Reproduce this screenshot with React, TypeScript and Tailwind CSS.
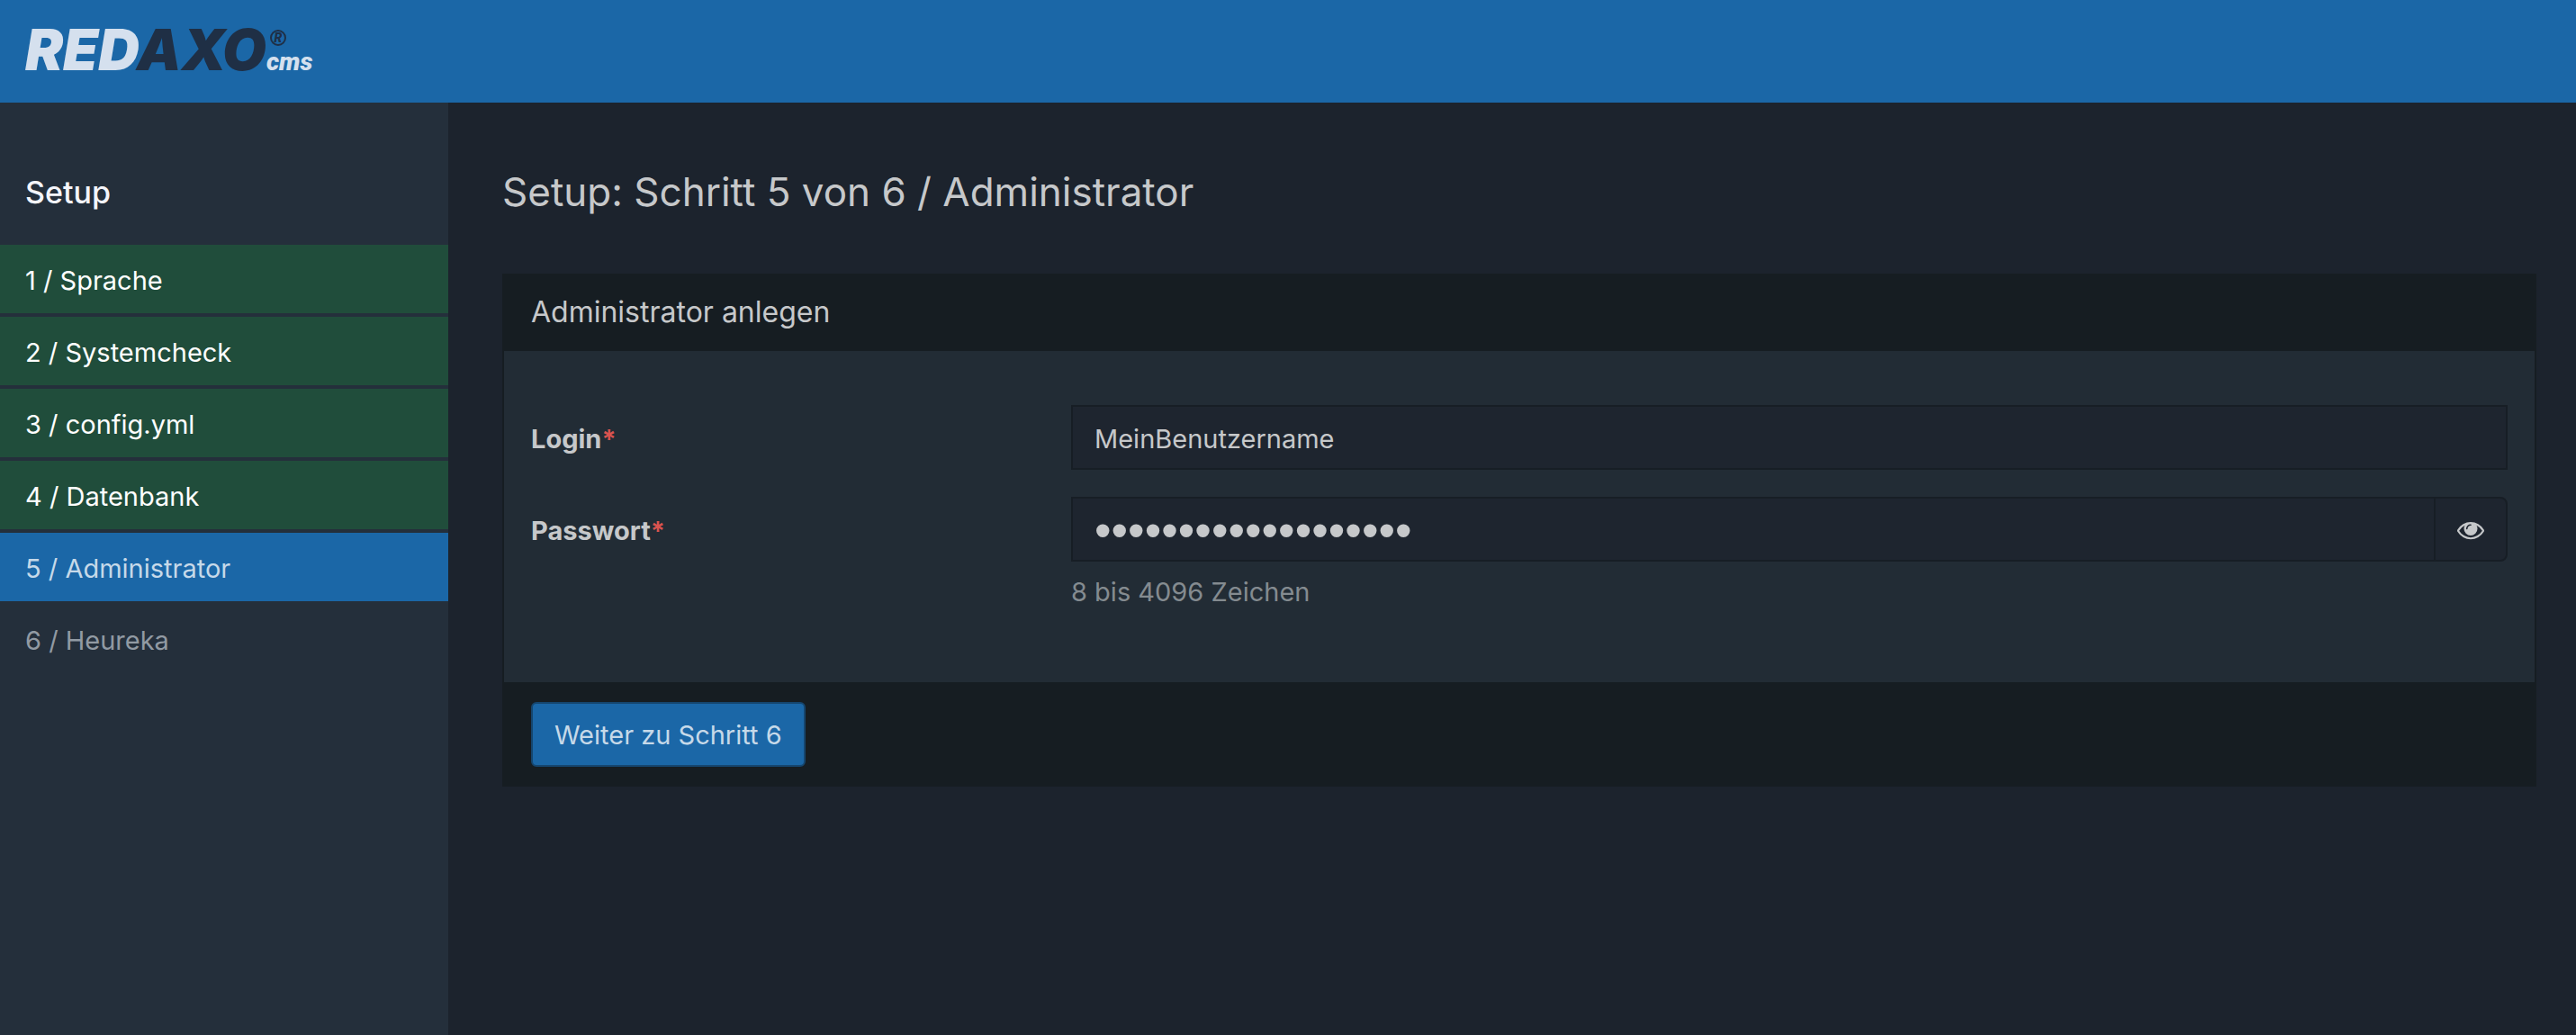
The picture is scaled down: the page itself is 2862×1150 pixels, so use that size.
import { useState } from "react";

const steps = [
  { label: "1 / Sprache", state: "done" },
  { label: "2 / Systemcheck", state: "done" },
  { label: "3 / config.yml", state: "done" },
  { label: "4 / Datenbank", state: "done" },
  { label: "5 / Administrator", state: "active" },
  { label: "6 / Heureka", state: "open" },
];

const stepStyles: Record<string, string> = {
  done: "bg-[#204d3b] text-white",
  active: "bg-[#1b67a7] text-[#c6d9e9]",
  open: "text-[#919aa3]",
};

function Logo() {
  return (
    <a href="#" aria-label="REDAXO cms" className="flex items-baseline font-black italic leading-none">
      <span className="text-[63px] leading-none text-[#d5e0ee]">
        RED<span className="text-[#1f2f45]">AXO</span>
      </span>
      <span className="relative font-[Roboto,sans-serif] text-[28px] leading-none text-[#d5e0ee]">
        cms
        <span className="absolute bottom-8 left-1 flex size-[18px] items-center justify-center rounded-full border-2 border-[#1f2f45] text-[14px] leading-none text-[#1f2f45]">
          R
        </span>
      </span>
    </a>
  );
}

function EyeIcon() {
  return (
    <svg viewBox="0 384 1792 1152" className="w-[30px]" fill="currentColor" aria-hidden="true">
      <path d="M1664 960q-152-236-381-353 61 104 61 225 0 185-131.500 316.500t-316.500 131.500-316.500-131.500-131.500-316.500q0-121 61-225-229 117-381 353 133 205 333.500 326.500t434.500 121.500 434.500-121.500 333.500-326.500zM944 576q0-20-14-34t-34-14q-125 0-214.500 89.500t-89.500 214.500q0 20 14 34t34 14 34-14 14-34q0-86 61-147t147-61q20 0 34-14t14-34zM1792 960q0 34-20 69-140 230-376.500 368.500t-499.500 138.500-499.500-139-376.500-368q-20-35-20-69t20-69q140-229 376.500-368t499.500-139 499.500 139 376.500 368q20 35 20 69z" />
    </svg>
  );
}

function Label({ id, children }: { id: string; children: string }) {
  return (
    <label htmlFor={id} className="flex h-[72px] w-[600px] shrink-0 items-center pt-1 font-bold">
      {children}
      <span className="text-[#d9534f]">*</span>
    </label>
  );
}

export default function App() {
  const [visible, setVisible] = useState(false);
  return (
    <div className="flex min-h-screen flex-col bg-[#1c232d] font-[Inter,sans-serif] text-[29px] leading-10 text-[#c6c8ca]">
      <header className="flex h-[114px] items-center bg-[#1b67a7] px-7 pb-1">
        <Logo />
      </header>
      <div className="flex grow">
        <nav className="w-[498px] shrink-0 bg-[#242f3b] pt-20">
          <h2 className="px-7 pb-[38px] text-[34px] font-medium text-[#f4f5fa]">Setup</h2>
          <ul className="flex flex-col gap-1">
            {steps.map((s) => (
              <li key={s.label} className={`px-7 pt-5 pb-4 ${stepStyles[s.state]}`}>
                {s.label}
              </li>
            ))}
          </ul>
        </nav>
        <main className="min-w-0 grow pt-[69px] pr-11 pl-[60px]">
          <h1 className="text-[44px] leading-[60px]">Setup: Schritt 5 von 6 / Administrator</h1>
          <form
            className="mt-[61px] border-2 border-[#161d22] bg-[#222c35]"
            onSubmit={(e) => e.preventDefault()}
          >
            <h2 className="bg-[#161d22] px-[30px] pt-[21px] pb-[23px] text-[32px]">Administrator anlegen</h2>
            <div className="flex flex-col gap-[30px] px-[30px] pt-[60px] pb-20">
              <div className="flex">
                <Label id="login">Login</Label>
                <input
                  id="login"
                  type="text"
                  defaultValue="MeinBenutzername"
                  className="h-[72px] min-w-0 grow border-2 border-[#171e25] bg-[#1e252f] px-6 pt-[2px] outline-none"
                />
              </div>
              <div className="flex">
                <Label id="password">Passwort</Label>
                <div className="min-w-0 grow">
                  <div className="flex h-[72px] rounded-r-lg border-2 border-[#171e25] bg-[#1e252f]">
                    <input
                      id="password"
                      type={visible ? "text" : "password"}
                      defaultValue="meinpasswort1234567"
                      className={
                        visible
                          ? "min-w-0 grow bg-transparent px-6 pt-[2px] outline-none"
                          : "min-w-0 grow bg-transparent px-6 pt-[2px] font-['Liberation_Sans',sans-serif] text-[53px] outline-none"
                      }
                    />
                    <button
                      type="button"
                      aria-label="Passwort anzeigen"
                      onClick={() => setVisible(!visible)}
                      className="flex w-20 items-center justify-center border-l-2 border-[#171e25] pt-1"
                    >
                      <EyeIcon />
                    </button>
                  </div>
                  <p className="mt-[14px] text-[#848b90]">8 bis 4096 Zeichen</p>
                </div>
              </div>
            </div>
            <div className="bg-[#161d22] px-[30px] pt-[22px] pb-5">
              <button
                type="submit"
                className="rounded-md border-2 border-[#15466f] bg-[#1b67a7] px-6 pt-[15px] pb-[13px] text-[#c6d9e9]"
              >
                Weiter zu Schritt 6
              </button>
            </div>
          </form>
        </main>
      </div>
    </div>
  );
}
